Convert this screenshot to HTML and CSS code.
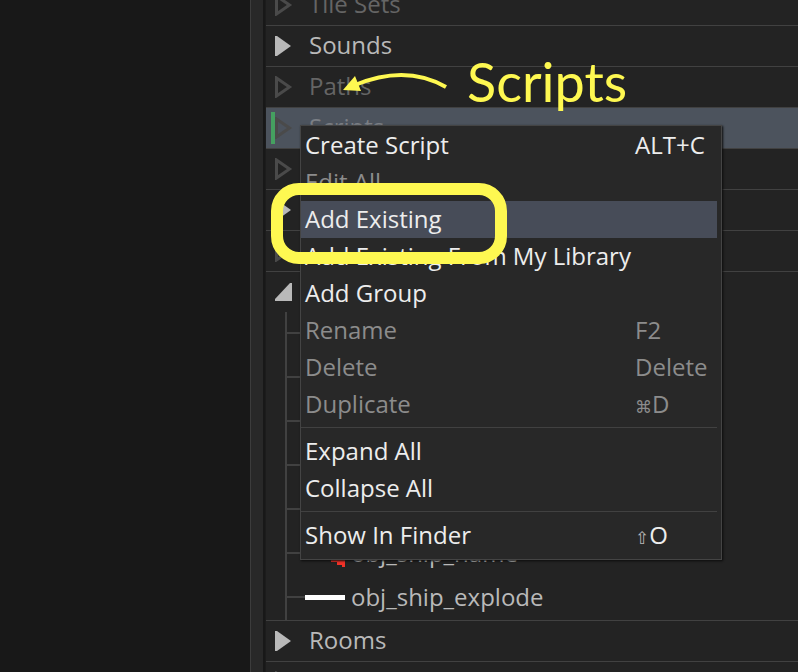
FILE: index.html
```html
<!DOCTYPE html>
<html lang="en">
<head>
<meta charset="utf-8">
<title>Resources</title>
<link rel="stylesheet" href="styles.css">
</head>
<body>
<svg class="defs" aria-hidden="true">
  <symbol id="open" viewBox="0 0 18 22"><path d="M1.5 2v18L14.5 11z" fill="none" stroke="currentColor" stroke-width="3"/></symbol>
  <symbol id="full" viewBox="0 0 18 22"><path d="M0 1h2l14 10L2 21H0z" fill="currentColor"/></symbol>
  <symbol id="down" viewBox="0 0 18 22"><path d="M17 2v18H0v-2L15 2z" fill="currentColor"/></symbol>
</svg>
<div class="app">
  <div class="workspace"></div>
  <div class="splitter"></div>
  <nav class="resources">
    <ul class="tree">
      <li class="row empty"><svg class="mark"><use href="#open"/></svg><span>Tile Sets</span></li>
      <li class="row"><svg class="mark"><use href="#full"/></svg><span>Sounds</span></li>
      <li class="row empty"><svg class="mark"><use href="#open"/></svg><span>Paths</span></li>
      <li class="row empty selected"><svg class="mark"><use href="#open"/></svg><span>Scripts</span></li>
      <li class="row empty"><svg class="mark"><use href="#open"/></svg></li>
      <li class="row"><svg class="mark"><use href="#full"/></svg></li>
      <li class="row empty"><svg class="mark"><use href="#open"/></svg></li>
      <li class="group">
        <div class="head"><svg class="mark"><use href="#down"/></svg></div>
        <ul class="children">
          <li></li>
          <li></li>
          <li></li>
          <li></li>
          <li></li>
          <li><svg class="thumb" viewBox="0 0 40 40"><path d="M26 20h14v14h-3v-2h-5v-3h-6z" fill="#f03228"/></svg><span>obj_ship_name</span></li>
          <li><svg class="thumb" viewBox="0 0 40 40"><path d="M0 18h40v5H0z" fill="#fff"/></svg><span>obj_ship_explode</span></li>
        </ul>
      </li>
      <li class="row"><svg class="mark"><use href="#full"/></svg><span>Rooms</span></li>
      <li class="row empty"><svg class="mark"><use href="#open"/></svg></li>
    </ul>
  </nav>
</div>

<div class="menu" role="menu">
  <button role="menuitem"><span>Create Script</span><kbd>ALT+C</kbd></button>
  <button role="menuitem" disabled><span>Edit All</span></button>
  <button role="menuitem" class="current"><span>Add Existing</span></button>
  <button role="menuitem"><span>Add Existing From My Library</span></button>
  <button role="menuitem"><span>Add Group</span></button>
  <button role="menuitem" disabled><span>Rename</span><kbd>F2</kbd></button>
  <button role="menuitem" disabled><span>Delete</span><kbd>Delete</kbd></button>
  <button role="menuitem" disabled><span>Duplicate</span><kbd><small>⌘</small>D</kbd></button>
  <hr>
  <button role="menuitem"><span>Expand All</span></button>
  <button role="menuitem"><span>Collapse All</span></button>
  <hr>
  <button role="menuitem"><span>Show In Finder</span><kbd><small class="shift">⇧</small>O</kbd></button>
</div>

<div class="ring"></div>
<svg class="arrow" viewBox="0 0 110 30" aria-hidden="true">
  <path d="M15 15Q66-6 106 17" fill="none" stroke="#fef851" stroke-width="4"/>
  <path d="M3 20L15 6l6 15z" fill="#fef851"/>
</svg>
<div class="note">Scripts</div>
</body>
</html>
```
FILE: styles.css
```css
* {
  box-sizing: border-box;
}

body {
  margin: 0;
  position: relative;
  height: 100vh;
  overflow: hidden;
  background: #232323;
  color: #b9b9b9;
  font: 24px/38px "Open Sans", "Noto Sans", sans-serif;
}

ul {
  margin: 0;
  padding: 0;
  list-style: none;
}

.defs {
  position: absolute;
  width: 0;
  height: 0;
}

.app {
  display: grid;
  grid-template-columns: 250px 15px 1fr;
  height: 100%;
}

.workspace {
  background: #181818;
}

.splitter {
  background: #282828;
  border-left: 1px solid #3c3c3c;
  border-right: 2px solid #181818;
}

.resources {
  border-left: 1px solid #1c1c1c;
  overflow: hidden;
}

/* The list is scrolled part of a row past its top. */
.tree {
  margin-top: -15px;
}

.row {
  display: flex;
  align-items: center;
  gap: 16px;
  height: 41px;
  padding-left: 9px;
  border-bottom: 1px solid #414141;
}

.row span {
  padding-bottom: 2px;
}

.empty {
  color: #656565;
}

.empty .mark {
  color: #4a4a4a;
}

.mark {
  flex: none;
  width: 18px;
  height: 22px;
}

.selected {
  padding-left: 5px;
  background: #4c535d;
  color: #7b7f85;
}

.selected::before {
  content: "";
  width: 4px;
  height: 32px;
  margin-right: -16px;
  background: #45a060;
}

.head {
  display: flex;
  align-items: center;
  height: 40px;
  padding-left: 9px;
}

.group {
  border-bottom: 1px solid #414141;
}

.children {
  margin-left: 19px;
  border-left: 2px solid #414141;
}

.children li {
  display: flex;
  align-items: center;
  height: 44px;
  padding-bottom: 2px;
}

.children li::before {
  content: "";
  width: 18px;
  height: 2px;
  background: #414141;
}

.thumb {
  width: 40px;
  height: 40px;
  margin-right: 6px;
}

.menu {
  position: absolute;
  top: 125px;
  left: 300px;
  width: 422px;
  padding: 1px 4px 5px 0;
  border: 1px solid #444;
  background: #282828;
  box-shadow: 1px 1px 2px #0c0c0c;
}

.menu button {
  display: flex;
  justify-content: space-between;
  width: 100%;
  padding: 0 0 2px 4px;
  border: 0;
  background: none;
  color: #ededed;
  font: inherit;
  line-height: 35px;
  text-align: left;
  white-space: nowrap;
}

.menu button:disabled {
  color: #8c8c8c;
}

.menu .current {
  background: #474c58;
}

.menu kbd {
  width: 82px;
  font: inherit;
}

.menu small {
  font: 17px/20px "DejaVu Sans", sans-serif;
}

.menu .shift {
  color: #b9b9b9;
}

.menu hr {
  margin: 4px 0 5px;
  border: 0;
  border-top: 1px solid #414141;
}

.ring {
  position: absolute;
  top: 183px;
  left: 271px;
  width: 236px;
  height: 81px;
  border: 12px solid #fef851;
  border-radius: 28px;
}

.arrow {
  position: absolute;
  top: 70px;
  left: 340px;
  width: 110px;
  height: 30px;
}

.note {
  position: absolute;
  top: 50px;
  left: 467px;
  color: #fef851;
  font: 54px/64px Lato, sans-serif;
}
```
